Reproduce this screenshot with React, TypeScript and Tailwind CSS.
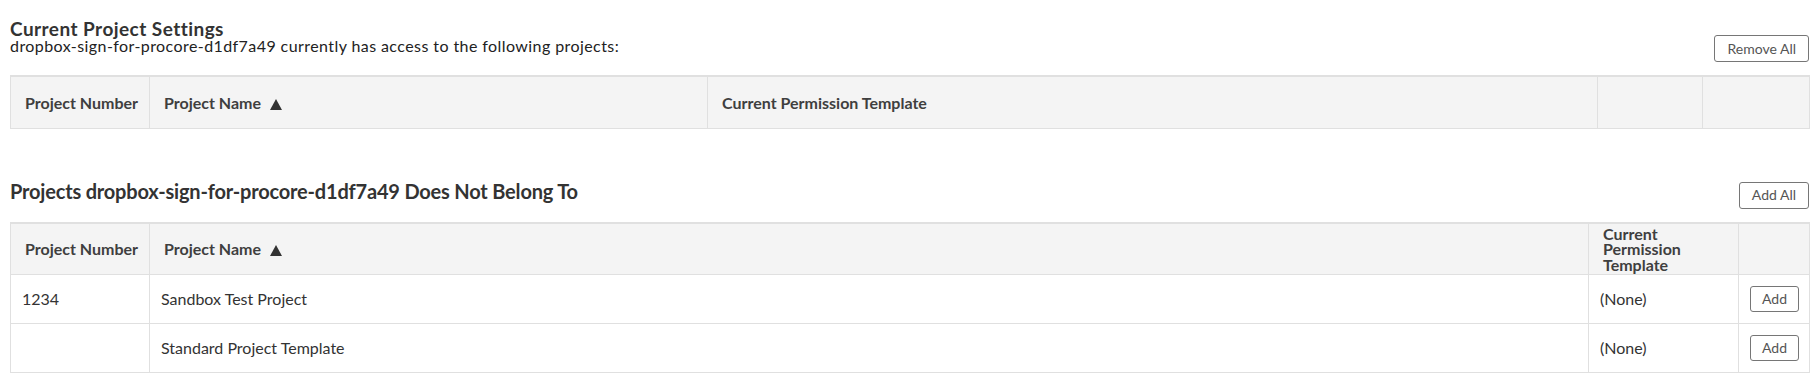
import React from "react";

const appName = "dropbox-sign-for-procore-d1df7a49";

const availableProjects = [
  { number: "1234", name: "Sandbox Test Project", template: "(None)" },
  { number: "", name: "Standard Project Template", template: "(None)" },
];

function SortArrow() {
  return (
    <svg width="12" height="11" viewBox="0 0 12 11" className="ml-[9px] inline-block align-[-1px]">
      <path d="M6 0 L12 11 L0 11 Z" fill="#333" />
    </svg>
  );
}

function OutlineButton({ label, small }: { label: string; small?: boolean }) {
  return (
    <button
      className={
        small
          ? "h-[26px] px-[11px] text-[14px] leading-none text-[#555] bg-white border border-[#767676] rounded-[3px]"
          : "h-[27px] px-3 text-[14px] leading-none text-[#555] bg-white border border-[#767676] rounded-[3px]"
      }
    >
      {label}
    </button>
  );
}

const th = "h-[52px] p-0 px-[14px] align-middle text-left font-bold text-[16px] leading-[15.5px] text-[#3f3f3f] border-x border-b border-[#e0e0e0]";
const td = "h-[49px] p-0 px-[11px] align-middle text-left text-[16px] text-[#333] border-x border-b border-[#e0e0e0]";

export default function App() {
  return (
    <div className="min-h-screen bg-white px-[10px] pt-[20px] font-['Lato',sans-serif]">
      {/* Current projects */}
      <div className="flex items-start justify-between">
        <div>
          <h2 className="text-[19px] leading-[18px] tracking-[0.45px] font-bold text-[#333]">
            Current Project Settings
          </h2>
          <p className="text-[16px] leading-[16px] tracking-[0.42px] text-[#222]">
            {appName} currently has access to the following projects:
          </p>
        </div>
        <div className="mt-[15px]">
          <OutlineButton label="Remove All" />
        </div>
      </div>

      <table className="mt-[13px] w-full table-fixed border-t-2 border-[#e0e0e0]">
        <colgroup>
          <col className="w-[139px]" />
          <col className="w-[558px]" />
          <col className="w-[890px]" />
          <col className="w-[105px]" />
          <col className="w-[107px]" />
        </colgroup>
        <thead className="bg-[#f4f4f4]">
          <tr>
            <th className={th + " whitespace-nowrap"}>Project Number</th>
            <th className={th}>
              Project Name
              <SortArrow />
            </th>
            <th className={th}>Current Permission Template</th>
            <th className={th}></th>
            <th className={th}></th>
          </tr>
        </thead>
      </table>

      {/* Projects not belonging */}
      <div className="mt-[52px] flex items-start justify-between">
        <h2 className="text-[20px] leading-[20px] tracking-[-0.19px] font-bold text-[#333]">
          Projects {appName} Does Not Belong To
        </h2>
        <div className="mt-[1px]">
          <OutlineButton label="Add All" />
        </div>
      </div>

      <table className="mt-[13px] w-full table-fixed border-t-2 border-[#e0e0e0]">
        <colgroup>
          <col className="w-[139px]" />
          <col className="w-[1439px]" />
          <col className="w-[150px]" />
          <col className="w-[71px]" />
        </colgroup>
        <thead className="bg-[#f4f4f4]">
          <tr>
            <th className={th + " whitespace-nowrap"}>Project Number</th>
            <th className={th}>
              Project Name
              <SortArrow />
            </th>
            <th className={th}>Current Permission Template</th>
            <th className={th}></th>
          </tr>
        </thead>
        <tbody>
          {availableProjects.map((p) => (
            <tr key={p.name}>
              <td className={td}>{p.number}</td>
              <td className={td}>{p.name}</td>
              <td className={td}>{p.template}</td>
              <td className={td + " text-center px-0"}>
                <OutlineButton label="Add" small />
              </td>
            </tr>
          ))}
        </tbody>
      </table>
    </div>
  );
}
